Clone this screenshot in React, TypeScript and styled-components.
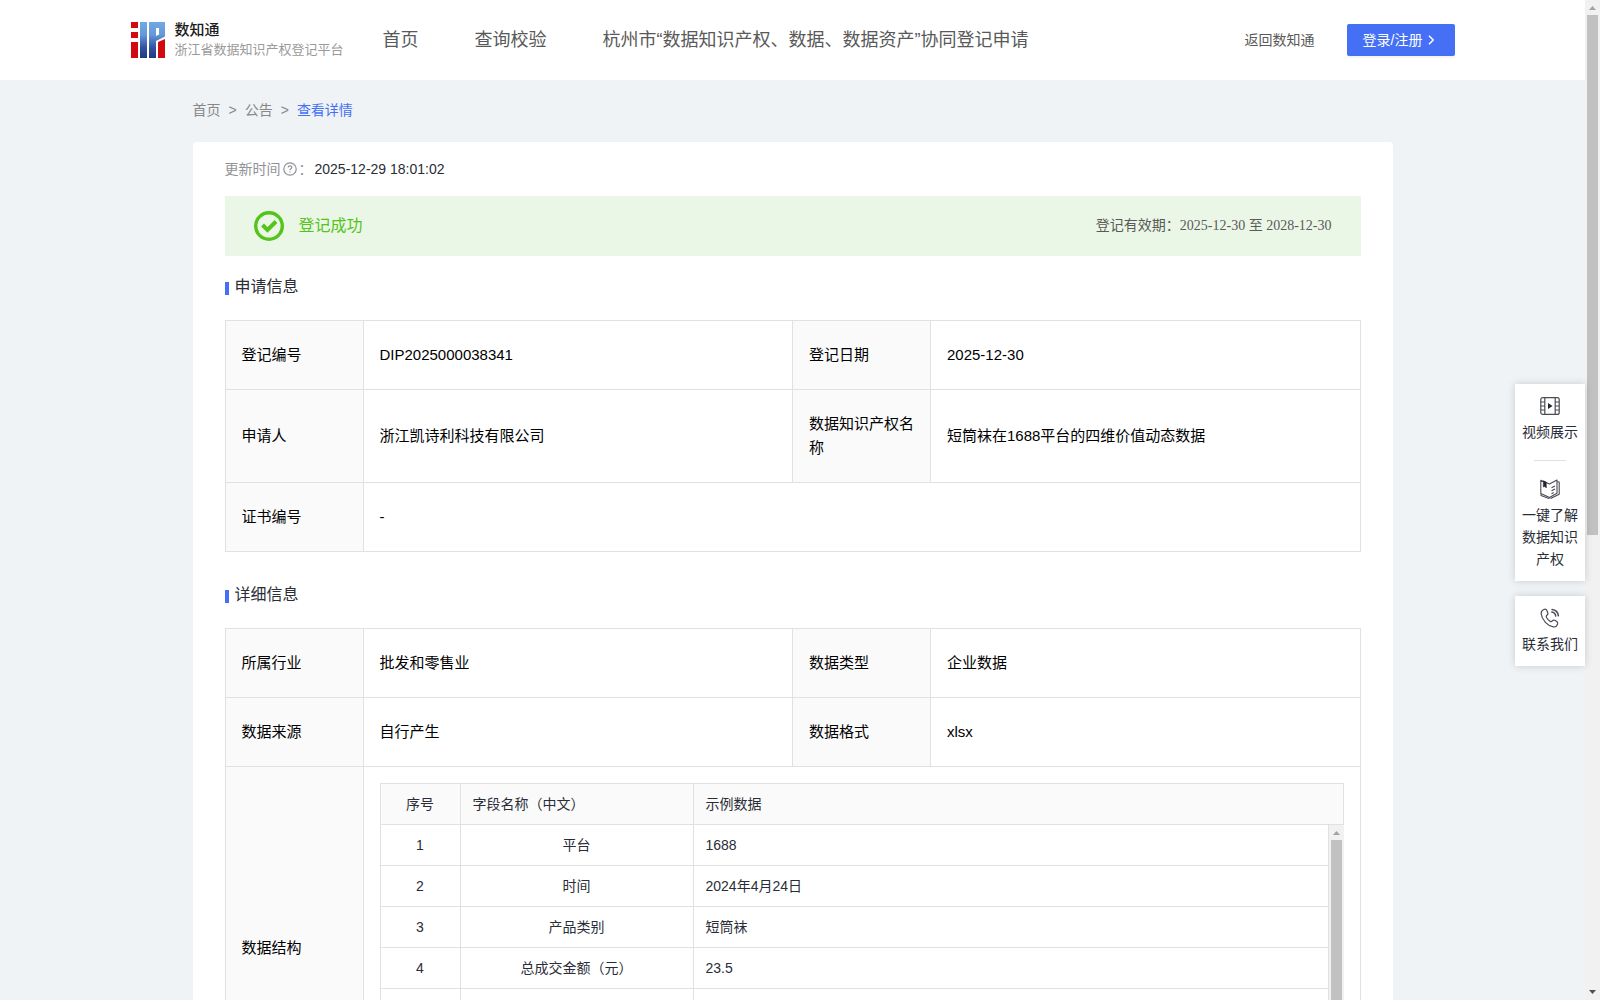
import React from "react";
import styled, { createGlobalStyle } from "styled-components";

const sans = '"Liberation Sans", "Noto Sans CJK SC", sans-serif';
const serif = '"Liberation Serif", "Noto Sans CJK SC", serif';
const blue = "#4570f6";
const line = "#e1e1e1";
const ink = "#2a2d37";

const GlobalStyle = createGlobalStyle`
  *, *::before, *::after { box-sizing: border-box; }
  body { margin: 0; font-family: ${sans}; font-size: 14px; line-height: 22px; color: ${ink}; }
  a { color: inherit; text-decoration: none; }
`;

const Shell = styled.div`
  position: relative;
  display: grid;
  grid-template-columns: minmax(0, 1fr) 15px;
  height: 100vh;
  overflow: hidden;
  background: #eff3f6;
`;

const Pane = styled.div`
  min-height: 0;
  overflow-y: auto;
  scrollbar-width: none;
`;

const Header = styled.header`
  background: #fff;
`;

const HeaderInner = styled.div`
  display: flex;
  align-items: center;
  max-width: 1324px;
  height: 80px;
  margin: 0 auto;
`;

const Brand = styled.a`
  display: flex;
  align-items: center;
  gap: 10px;
  width: 252px;
`;

const BrandText = styled.span`
  display: flex;
  flex-direction: column;
`;

const BrandName = styled.strong`
  font-size: 15px;
  line-height: 20px;
  font-weight: 500;
  color: #1c1c1c;
`;

const BrandNote = styled.span`
  font-size: 13px;
  line-height: 20px;
  color: #9a9a9a;
  white-space: nowrap;
`;

const Nav = styled.nav`
  display: flex;
  flex: 1;
  gap: 56px;
  font-size: 18px;
  line-height: 26px;
  color: #595959;
  white-space: nowrap;
`;

const BackLink = styled.a`
  margin-right: 32px;
  color: #595959;
`;

const LoginButton = styled.button`
  display: flex;
  align-items: center;
  gap: 2px;
  height: 32px;
  padding: 0 16px;
  border: 0;
  border-radius: 2px;
  background: ${blue};
  box-shadow: 0 2px 0 rgba(0, 0, 0, 0.045);
  color: #fff;
  font: 14px/22px ${sans};
  white-space: nowrap;
`;

const Main = styled.main`
  max-width: 1200px;
  margin: 0 auto;
`;

const Crumbs = styled.nav`
  display: flex;
  gap: 8px;
  padding: 19px 0 21px;
  color: #888;
`;

const CurrentCrumb = styled.a`
  color: ${blue};
`;

const Card = styled.div`
  padding: 16px 32px;
  border-radius: 4px;
  background: #fff;
`;

const Updated = styled.div`
  display: flex;
  align-items: center;
  margin-bottom: 16px;
`;

const UpdatedLabel = styled.span`
  display: flex;
  align-items: center;
  gap: 2px;
  width: 90px;
  color: #919297;
`;

const Banner = styled.div`
  display: flex;
  align-items: center;
  justify-content: space-between;
  height: 60px;
  margin-bottom: 19px;
  padding: 0 29px;
  background: #ebf7e6;
`;

const Status = styled.div`
  display: flex;
  align-items: center;
  gap: 15px;
  font-size: 16px;
  line-height: 24px;
  color: #52c41a;
`;

const Validity = styled.div`
  font-family: ${serif};
  color: #595959;
`;

const SectionTitle = styled.h2`
  display: flex;
  align-items: center;
  gap: 6px;
  margin: 0 0 21px;
  font-size: 16px;
  line-height: 24px;
  font-weight: 400;

  &::before {
    content: "";
    width: 4px;
    height: 13px;
    margin-top: 3px;
    background: ${blue};
  }
`;

const InfoTable = styled.table`
  width: 100%;
  margin-bottom: 31px;
  border-collapse: collapse;
  table-layout: fixed;
  font-size: 15px;
  line-height: 24px;
  color: #000;
`;

const LabelCell = styled.th`
  padding: 22px 16px;
  border: 1px solid ${line};
  background: #fafafa;
  font-weight: 400;
  text-align: left;
`;

const ValueCell = styled.td<{ $nested?: boolean }>`
  padding: ${(p) => (p.$nested ? "16px" : "22px 16px")};
  border: 1px solid ${line};
`;

const LabelCol = styled.col`
  width: 138px;
`;

const FieldGrid = styled.div`
  font-size: 14px;
  line-height: 22px;
  color: ${ink};
`;

const FieldTable = styled.table`
  width: 100%;
  border-collapse: separate;
  border-spacing: 0;
  table-layout: fixed;
  border-left: 1px solid ${line};
`;

const IndexCol = styled.col`
  width: 80px;
`;

const NameCol = styled.col`
  width: 233px;
`;

const HeadCell = styled.th<{ $center?: boolean }>`
  height: 42px;
  padding: 0 12px;
  border: solid ${line};
  border-width: 1px 1px 1px 0;
  background: #fafafa;
  font-weight: 400;
  text-align: ${(p) => (p.$center ? "center" : "left")};
`;

const BodyCell = styled.td<{ $center?: boolean }>`
  height: 41px;
  padding: 0 12px;
  border: solid ${line};
  border-width: 0 1px 1px 0;
  text-align: ${(p) => (p.$center ? "center" : "left")};
`;

const FieldBody = styled.div`
  display: grid;
  grid-template-columns: minmax(0, 1fr) 15px;
  height: 287px;
`;

const Track = styled.div`
  display: flex;
  flex-direction: column;
  min-height: 0;
  background: #f1f1f1;
`;

const Thumb = styled.div<{ $share: number }>`
  flex: 0 0 ${(p) => p.$share}%;
  margin: 0 2px;
  background: #c1c1c1;
`;

const Arrow = styled.svg<{ $down?: boolean }>`
  flex: none;
  display: block;
  width: 15px;
  height: 15px;
  margin-top: ${(p) => (p.$down ? "auto" : "0")};
`;

const Floating = styled.aside`
  position: absolute;
  top: 384px;
  right: 15px;
  display: flex;
  flex-direction: column;
  gap: 15px;
  width: 70px;
`;

const FloatCard = styled.div`
  padding: 12px 6px 11px;
  background: #fff;
  box-shadow: 0 0 8px rgba(0, 0, 0, 0.16);
`;

const FloatItem = styled.a`
  display: flex;
  flex-direction: column;
  align-items: center;
  gap: 5px;
  text-align: center;

  & + & {
    margin-top: 17px;
  }

  & + &::before {
    content: "";
    width: 32px;
    height: 1px;
    margin-bottom: 13px;
    background: ${line};
  }
`;

const Logo = () => (
  <svg width="34" height="36" viewBox="0 0 34 36" aria-hidden="true">
    <defs>
      <linearGradient id="brandBlue" x1="0" y1="0" x2="0" y2="36" gradientUnits="userSpaceOnUse">
        <stop offset="0" stopColor="#70a8e4" />
        <stop offset="0.35" stopColor="#6599da" />
        <stop offset="0.7" stopColor="#32549f" />
        <stop offset="1" stopColor="#233982" />
      </linearGradient>
    </defs>
    <path fill="#d20a10" d="M0 0h7v6H0zM0 10h7v6H0zM0 20h7v16H0zM27 20l7-3v19h-7z" />
    <path
      fill="url(#brandBlue)"
      fillRule="evenodd"
      d="M9 0h7v36H9zM18 0h16v14.500l-9 4.500v17h-7zM25 6v8l3-1.500V6z"
    />
  </svg>
);

const Chevron = () => (
  <svg width="14" height="14" viewBox="0 0 14 14" fill="none" stroke="#fff" strokeWidth="1.500" aria-hidden="true">
    <path d="M4 2.800L8.200 7 4 11.200" />
  </svg>
);

const HelpIcon = () => (
  <svg width="14" height="14" viewBox="0 0 14 14" fill="none" stroke="#919297" strokeWidth="1.200" aria-hidden="true">
    <circle cx="7" cy="7" r="6.200" />
    <path d="M5.200 5.600C5.200 4.500 6 3.900 7 3.900s1.800.6 1.800 1.600C8.800 6.700 7 6.800 7 8.300M7 9.400v1.200" />
  </svg>
);

const SuccessIcon = () => (
  <svg width="30" height="30" viewBox="0 0 30 30" fill="none" stroke="#52c41a" aria-hidden="true">
    <circle cx="15" cy="15" r="13.300" strokeWidth="3.400" />
    <path d="M8.500 14l5 5 8.500-8.500" strokeWidth="4" />
  </svg>
);

const FilmIcon = () => (
  <svg width="20" height="20" viewBox="0 0 20 20" fill="none" stroke="#4a4c55" strokeWidth="1.200" aria-hidden="true">
    <rect x="0.800" y="1.600" width="18.400" height="16.800" rx="2" />
    <path d="M4.800 1.600v16.800M15.200 1.600v16.800M.8 6h4M.8 10h4M.8 14h4M15.200 6h4M15.200 10h4M15.200 14h4" />
    <path d="M8 7l4.500 3L8 13z" fill="#23252e" stroke="none" />
  </svg>
);

const BookIcon = () => (
  <svg width="20" height="20" viewBox="0 0 20 20" fill="none" stroke="#4a4c55" strokeWidth="1.100" strokeLinejoin="round" aria-hidden="true">
    <path d="M.8 1.200L9.500 5 17 1v13.300L9.500 18.500.8 14.500z" />
    <path d="M17 2.800l2.200.2v12.200L10.500 19.600M1 15v1.500l8.500 3.200M11.500 8.700l3.500-1.800M11.500 11.700l3.500-1.800M11.500 14.700l2.200-1.200" />
    <path d="M3.300 1.800l3 1.300V9L4.800 7.500 3.300 8z" fill="#23252e" stroke="#23252e" strokeWidth="0.500" />
  </svg>
);

const PhoneIcon = () => (
  <svg width="20" height="20" viewBox="0 0 20 20" fill="none" stroke="#4a4c55" strokeWidth="1.200" strokeLinejoin="round" strokeLinecap="round" aria-hidden="true">
    <path d="M4.500 1.300C2.300 2 .9 3.800 1.200 6c.8 6 6.300 11.800 12.200 12.900 2 .4 3.600-1 4.200-3 .3-1.300-.2-2-1.200-2.600l-1.600-1c-1-.5-1.800-.2-2.500.6-.7.9-1.400.9-2.300.3-1.500-1-2.700-2.300-3.500-3.700-.5-1-.4-1.600.4-2.200.9-.6 1.200-1.300.9-2.300l-.8-2.300C6.500 1.500 5.800 1 4.500 1.300z" />
    <path d="M12 1.400c3.600.3 6 2.900 6.400 6.400M11.800 4c2.300.3 3.600 1.800 3.900 4" strokeWidth="1.500" />
  </svg>
);

const Scrollbar = ({ share }: { share: number }) => (
  <Track aria-hidden="true">
    <Arrow viewBox="0 0 15 15">
      <path d="M4 10l3.500-4L11 10z" fill="#a3a3a3" />
    </Arrow>
    <Thumb $share={share} />
    <Arrow $down viewBox="0 0 15 15">
      <path d="M4 5l3.500 4L11 5z" fill="#505050" />
    </Arrow>
  </Track>
);

const fields = [
  ["平台", "1688"],
  ["时间", "2024年4月24日"],
  ["产品类别", "短筒袜"],
  ["总成交金额（元）", "23.5"],
];

const emptyRows = [5, 6, 7];

const FieldColumns = () => (
  <colgroup>
    <IndexCol />
    <NameCol />
    <col />
  </colgroup>
);

const InfoColumns = () => (
  <colgroup>
    <LabelCol />
    <col />
    <LabelCol />
    <col />
  </colgroup>
);

const PairRow = ({ items }: { items: [string, string][] }) => (
  <tr>
    {items.map(([label, value]) => (
      <React.Fragment key={label}>
        <LabelCell scope="row">{label}</LabelCell>
        <ValueCell>{value}</ValueCell>
      </React.Fragment>
    ))}
  </tr>
);

export default function App() {
  return (
    <>
      <GlobalStyle />
      <Shell>
        <Pane>
          <Header>
            <HeaderInner>
              <Brand href="#">
                <Logo />
                <BrandText>
                  <BrandName>数知通</BrandName>
                  <BrandNote>浙江省数据知识产权登记平台</BrandNote>
                </BrandText>
              </Brand>
              <Nav>
                <a href="#">首页</a>
                <a href="#">查询校验</a>
                <a href="#">杭州市“数据知识产权、数据、数据资产”协同登记申请</a>
              </Nav>
              <BackLink href="#">返回数知通</BackLink>
              <LoginButton type="button">
                登录/注册
                <Chevron />
              </LoginButton>
            </HeaderInner>
          </Header>
          <Main>
            <Crumbs>
              <a href="#">首页</a>
              <span>&gt;</span>
              <a href="#">公告</a>
              <span>&gt;</span>
              <CurrentCrumb href="#">查看详情</CurrentCrumb>
            </Crumbs>
            <Card>
              <Updated>
                <UpdatedLabel>
                  更新时间
                  <HelpIcon />：
                </UpdatedLabel>
                <time>2025-12-29 18:01:02</time>
              </Updated>
              <Banner>
                <Status>
                  <SuccessIcon />
                  登记成功
                </Status>
                <Validity>登记有效期：2025-12-30 至 2028-12-30</Validity>
              </Banner>
              <SectionTitle>申请信息</SectionTitle>
              <InfoTable>
                <InfoColumns />
                <tbody>
                  <PairRow items={[["登记编号", "DIP2025000038341"], ["登记日期", "2025-12-30"]]} />
                  <PairRow
                    items={[
                      ["申请人", "浙江凯诗利科技有限公司"],
                      ["数据知识产权名称", "短筒袜在1688平台的四维价值动态数据"],
                    ]}
                  />
                  <tr>
                    <LabelCell scope="row">证书编号</LabelCell>
                    <ValueCell colSpan={3}>-</ValueCell>
                  </tr>
                </tbody>
              </InfoTable>
              <SectionTitle>详细信息</SectionTitle>
              <InfoTable>
                <InfoColumns />
                <tbody>
                  <PairRow items={[["所属行业", "批发和零售业"], ["数据类型", "企业数据"]]} />
                  <PairRow items={[["数据来源", "自行产生"], ["数据格式", "xlsx"]]} />
                  <tr>
                    <LabelCell scope="row">数据结构</LabelCell>
                    <ValueCell colSpan={3} $nested>
                      <FieldGrid>
                        <FieldTable>
                          <FieldColumns />
                          <thead>
                            <tr>
                              <HeadCell $center>序号</HeadCell>
                              <HeadCell>字段名称（中文）</HeadCell>
                              <HeadCell>示例数据</HeadCell>
                            </tr>
                          </thead>
                        </FieldTable>
                        <FieldBody>
                          <FieldTable>
                            <FieldColumns />
                            <tbody>
                              {fields.map(([name, sample], i) => (
                                <tr key={name}>
                                  <BodyCell $center>{i + 1}</BodyCell>
                                  <BodyCell $center>{name}</BodyCell>
                                  <BodyCell>{sample}</BodyCell>
                                </tr>
                              ))}
                              {emptyRows.map((n) => (
                                <tr key={n}>
                                  <BodyCell />
                                  <BodyCell />
                                  <BodyCell />
                                </tr>
                              ))}
                            </tbody>
                          </FieldTable>
                          <Scrollbar share={70} />
                        </FieldBody>
                      </FieldGrid>
                    </ValueCell>
                  </tr>
                </tbody>
              </InfoTable>
            </Card>
          </Main>
        </Pane>
        <Scrollbar share={52} />
        <Floating>
          <FloatCard>
            <FloatItem href="#">
              <FilmIcon />
              视频展示
            </FloatItem>
            <FloatItem href="#">
              <BookIcon />
              一键了解数据知识产权
            </FloatItem>
          </FloatCard>
          <FloatCard>
            <FloatItem href="#">
              <PhoneIcon />
              联系我们
            </FloatItem>
          </FloatCard>
        </Floating>
      </Shell>
    </>
  );
}
